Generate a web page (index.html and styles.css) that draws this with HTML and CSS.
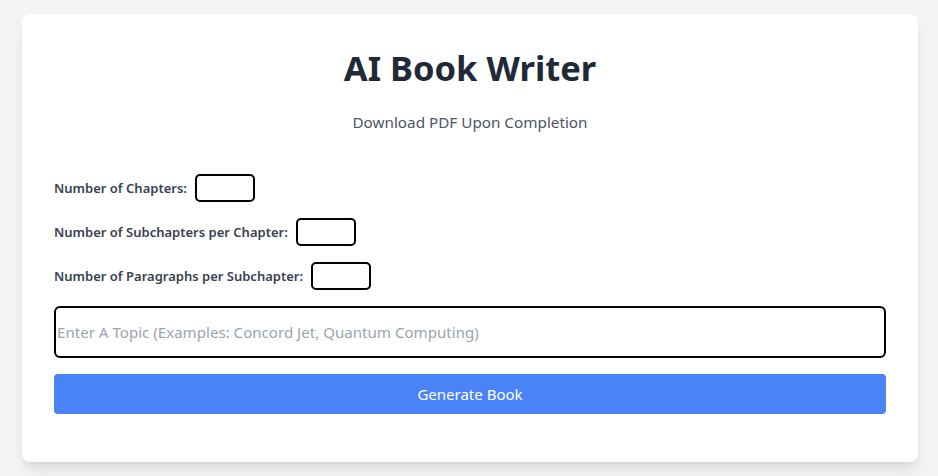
FILE: index.html
```html
<!DOCTYPE html>
<html lang="en">
<head>
<meta charset="utf-8">
<title>AI Book Writer</title>
<link rel="stylesheet" href="styles.css">
</head>
<body>
<main class="card">
  <h1 class="title">AI Book Writer</h1>
  <p class="subtitle">Download PDF Upon Completion</p>
  <div class="field">
    <label class="label">Number of Chapters:</label>
    <input class="num" type="text">
  </div>
  <div class="field">
    <label class="label">Number of Subchapters per Chapter:</label>
    <input class="num" type="text">
  </div>
  <div class="field">
    <label class="label">Number of Paragraphs per Subchapter:</label>
    <input class="num" type="text">
  </div>
  <input class="topic" type="text" placeholder="Enter A Topic (Examples: Concord Jet, Quantum Computing)">
  <button class="btn">Generate Book</button>
</main>
</body>
</html>
```

FILE: styles.css
```css
* { box-sizing: border-box; }
html, body { margin: 0; }
body {
  background: #f3f4f6;
  font-family: "Noto Sans", "Open Sans", sans-serif;
  padding: 14px 20px 14px 22px;
}
.card {
  width: 896px;
  background: #fff;
  border-radius: 8px;
  box-shadow: 0 10px 15px -3px rgba(0,0,0,0.1), 0 4px 6px -4px rgba(0,0,0,0.1);
  padding: 32px 32px 48px;
  display: flex;
  flex-direction: column;
}
.title {
  margin: 0;
  text-align: center;
  font-size: 34.5px;
  line-height: 44px;
  font-weight: 700;
  color: #1f2937;
}
.subtitle {
  margin: 20px 0 40px;
  text-align: center;
  font-size: 15.25px;
  line-height: 24px;
  color: #4b5563;
}
.field {
  display: flex;
  align-items: center;
  gap: 8px;
  margin-bottom: 16px;
}
.label {
  font-size: 13px;
  font-weight: 600;
  color: #374151;
}
.num {
  width: 60px;
  height: 28px;
  border: 2px solid #000;
  border-radius: 5px;
  padding: 0 4px;
  font: inherit;
}
.topic {
  width: 100%;
  height: 52px;
  border: 2px solid #000;
  border-radius: 6px;
  padding: 0 1px;
  font-family: inherit;
  font-size: 15.1px;
  color: #111827;
  margin-top: 0;
}
.topic::placeholder { color: #9ca3af; }
.btn {
  margin-top: 16px;
  width: 100%;
  height: 40px;
  border: none;
  border-radius: 4px;
  background: #4a83f8;
  color: #fff;
  font-family: inherit;
  font-size: 15px;
}
```
